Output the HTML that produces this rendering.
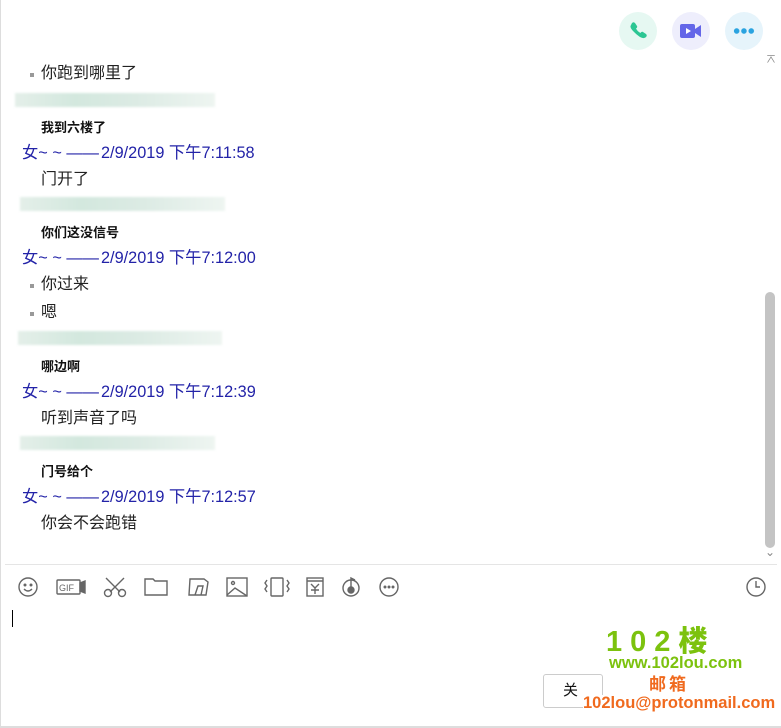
<!DOCTYPE html><html><head><meta charset="utf-8"><style>
body{margin:0;width:781px;height:728px;background:#fff;position:relative;overflow:hidden;font-family:"Liberation Sans","Noto Sans CJK SC",sans-serif;}
.a{position:absolute;white-space:nowrap;line-height:1;}
.m{font-size:16px;color:#222;left:41px;}
.b{font-size:13px;font-weight:bold;color:#111;left:41px;}
.t{font-size:16.3px;color:#2323a8;left:22px;}
.t i{font-style:normal;display:inline-block;width:79px;}
.d{position:absolute;left:30px;width:4px;height:4px;background:#999;}
.bl{position:absolute;height:14px;background:linear-gradient(90deg,#e4efe9,#d3e8de 30%,#dcebe4 60%,#eef5f1);filter:blur(1px);}
</style></head><body>
<div style="position:absolute;left:0;top:0;width:1px;height:728px;background:#ddd"></div>
<div style="position:absolute;left:0;top:726px;width:781px;height:2px;background:#ddd"></div>
<div style="position:absolute;left:619px;top:12px;width:38px;height:38px;border-radius:50%;background:#e6f8f2"></div>
<svg class="a" style="left:628px;top:21px" width="20" height="20" viewBox="0 0 20 20"><path d="M4 2c1-1 2-1 3 0l2 3c.5 1 0 2-1 2.5 1 2 2.5 3.5 4.5 4.5.5-1 1.5-1.5 2.5-1l3 2c1 1 1 2 0 3-2 2-5 1-8-1.5S2 8 2.5 5z" fill="#2cc693"/></svg>
<div style="position:absolute;left:672px;top:12px;width:38px;height:38px;border-radius:50%;background:#eeeefc"></div>
<svg class="a" style="left:679px;top:21px" width="24" height="20" viewBox="0 0 24 20"><rect x="1" y="3" width="15" height="14" rx="2" fill="#6466e8"/><path d="M16 8l6-4v12l-6-4z" fill="#6466e8"/><path d="M7 7v6l5-3z" fill="#fff"/></svg>
<div style="position:absolute;left:725px;top:12px;width:38px;height:38px;border-radius:50%;background:#e6f4fb"></div>
<div class="a" style="left:733px;top:28px;width:22px;height:6px;background:radial-gradient(circle,#2aa3e0 2.5px,transparent 3px) 0 0/7.3px 6px"></div>
<div class="a" style="left:765px;top:53px;font-size:12px;color:#888">⌅</div>
<div style="position:absolute;left:765px;top:292px;width:10px;height:256px;background:#c4c4c4;border-radius:5px"></div>
<div class="a" style="left:765px;top:546px;font-size:12px;color:#888">⌄</div>
<div class="d" style="top:73px"></div><div class="a m" style="top:66px">你跑到哪里了</div>
<div class="bl" style="left:15px;top:93px;width:200px"></div>
<div class="a b" style="top:121px">我到六楼了</div>
<div class="a t" style="top:145px"><i>女~ ~ ——</i>2/9/2019 下午7:11:58</div>
<div class="a m" style="top:172px">门开了</div>
<div class="bl" style="left:20px;top:197px;width:205px"></div>
<div class="a b" style="top:226px">你们这没信号</div>
<div class="a t" style="top:250px"><i>女~ ~ ——</i>2/9/2019 下午7:12:00</div>
<div class="d" style="top:284px"></div><div class="a m" style="top:277px">你过来</div>
<div class="d" style="top:312px"></div><div class="a m" style="top:305px">嗯</div>
<div class="bl" style="left:18px;top:331px;width:204px"></div>
<div class="a b" style="top:360px">哪边啊</div>
<div class="a t" style="top:384px"><i>女~ ~ ——</i>2/9/2019 下午7:12:39</div>
<div class="a m" style="top:411px">听到声音了吗</div>
<div class="bl" style="left:20px;top:436px;width:195px"></div>
<div class="a b" style="top:465px">门号给个</div>
<div class="a t" style="top:489px"><i>女~ ~ ——</i>2/9/2019 下午7:12:57</div>
<div class="a m" style="top:516px">你会不会跑错</div>
<div style="position:absolute;left:5px;top:564px;width:772px;height:1px;background:#e5e5e5"></div>
<svg style="position:absolute;left:0;top:570px" width="781" height="34" fill="none" stroke="#666" stroke-width="1.4">
<circle cx="28" cy="17" r="9"/><circle cx="25" cy="15" r=".8" fill="#666"/><circle cx="31" cy="15" r=".8" fill="#666"/><path d="M24 19q4 4 8 0"/>
<rect x="57" y="10" width="23" height="14" rx="1"/><text x="59" y="21" font-size="9" fill="#666" stroke="none" font-family="Liberation Sans">GIF</text><path d="M80 13l5-2v12l-5-2z" fill="#666"/>
<path d="M106 8l14 14M124 8l-14 14"/><circle cx="108" cy="23" r="3.5"/><circle cx="122" cy="23" r="3.5"/>
<path d="M145 9h8l2 2h12v14h-22z"/>
<path d="M190 9h14l4 3-2 13h-17z M195 25l3-9h5l-2 9"/>
<rect x="227" y="8" width="20" height="18"/><circle cx="233" cy="13" r="1.5"/><path d="M227 25l8-7 12 8"/>
<rect x="271" y="8" width="12" height="18" rx="1"/><path d="M267 10l-2 3 2 3-2 3 2 3M287 10l2 3-2 3 2 3-2 3"/>
<rect x="307" y="8" width="16" height="18"/><path d="M307 11h16M311 14l4 4 4-4M315 18v6M311 20h8"/>
<circle cx="351" cy="18" r="8"/><circle cx="351" cy="20" r="3" fill="#666"/><path d="M351 17v-9l4 2"/>
<circle cx="389" cy="17" r="9"/><circle cx="385" cy="17" r=".8" fill="#666"/><circle cx="389" cy="17" r=".8" fill="#666"/><circle cx="393" cy="17" r=".8" fill="#666"/>
<circle cx="756" cy="17" r="9"/><path d="M756 11v6h4"/>
</svg>
<div style="position:absolute;left:12px;top:610px;width:1px;height:17px;background:#000"></div>
<div style="position:absolute;left:543px;top:674px;width:60px;height:34px;border:1px solid #ccc;border-radius:3px;box-sizing:border-box"></div>
<div class="a" style="left:563px;top:683px;font-size:15px;color:#111">关</div>
<div class="a" style="left:606px;top:628px;font-size:29px;font-weight:900;color:#7cc20e;letter-spacing:8px">102楼</div>
<div class="a" style="left:609px;top:655px;font-size:16.5px;font-weight:bold;color:#7cc20e">www.102lou.com</div>
<div class="a" style="left:649px;top:676px;font-size:17px;font-weight:bold;color:#f06a1e;letter-spacing:3px">邮箱</div>
<div class="a" style="left:583px;top:695px;font-size:16.5px;font-weight:bold;color:#f06a1e;background:#fff">102lou@protonmail.com</div>
</body></html>
